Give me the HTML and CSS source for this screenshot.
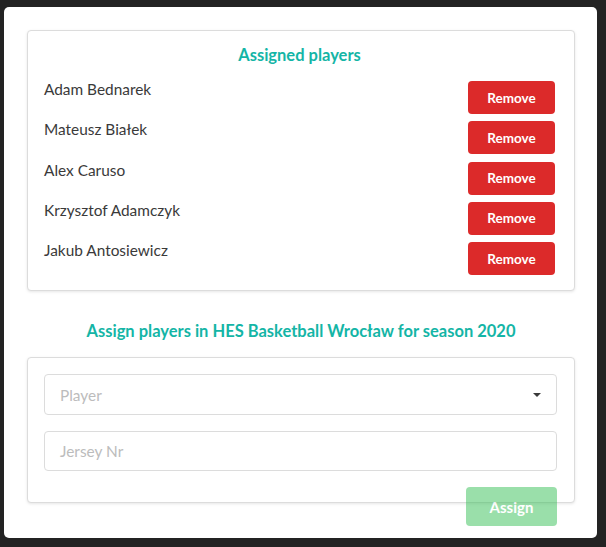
FILE: index.html
```html
<!DOCTYPE html>
<html>
<head>
<meta charset="utf-8">
<link rel="stylesheet" href="styles.css">
</head>
<body>
<div class="backdrop">
  <div class="modal">
    <section class="card assigned">
      <h2 class="title">Assigned players</h2>
      <ul class="players">
        <li class="player"><span class="name">Adam Bednarek</span><button class="btn-remove">Remove</button></li>
        <li class="player"><span class="name">Mateusz Białek</span><button class="btn-remove">Remove</button></li>
        <li class="player"><span class="name">Alex Caruso</span><button class="btn-remove">Remove</button></li>
        <li class="player"><span class="name">Krzysztof Adamczyk</span><button class="btn-remove">Remove</button></li>
        <li class="player"><span class="name">Jakub Antosiewicz</span><button class="btn-remove">Remove</button></li>
      </ul>
    </section>
    <h2 class="title assign-title">Assign players in HES Basketball Wrocław for season 2020</h2>
    <section class="card form">
      <div class="field select">
        <span class="placeholder">Player</span>
        <span class="caret"></span>
      </div>
      <div class="field">
        <span class="placeholder">Jersey Nr</span>
      </div>
    </section>
    <button class="btn-assign">Assign</button>
  </div>
</div>
</body>
</html>
```

FILE: styles.css
```css
* { box-sizing: border-box; }
html, body { margin: 0; padding: 0; }
body {
  background: #232323;
  font-family: Lato, "Open Sans", sans-serif;
  width: 606px;
  height: 547px;
  overflow: hidden;
}
.backdrop {
  padding: 7px 0 0 4px;
}
.modal {
  width: 593px;
  height: 531px;
  background: #fff;
  border-radius: 5px;
  padding: 23px 22px 12px 23px;
  display: flex;
  flex-direction: column;
}
.card {
  border: 1px solid #dcdcdc;
  border-radius: 4px;
  box-shadow: 0 1px 3px rgba(0,0,0,0.10);
  background: #fff;
  flex-shrink: 0;
}
.assigned {
  padding: 13px 19px 15px 16px;
  height: 261px;
}
.title {
  margin: 0;
  text-align: center;
  color: #14b5a6;
  font-size: 16.5px;
  font-weight: 700;
  line-height: 22px;
}
.players {
  list-style: none;
  margin: 15px 0 0;
  padding: 0;
  display: flex;
  flex-direction: column;
  gap: 7.25px;
}
.player {
  display: flex;
  justify-content: space-between;
  align-items: flex-start;
  height: 33px;
}
.name {
  font-size: 15.4px;
  color: #3a3a3a;
  line-height: 18px;
  margin-top: -1px;
}
.btn-remove {
  width: 87px;
  height: 33px;
  border: none;
  border-radius: 4px;
  background: #dc2a2a;
  color: #fff;
  font-family: Lato, sans-serif;
  font-weight: 700;
  font-size: 13.5px;
  padding: 0;
}
.assign-title {
  margin: 29px 0 15px;
  flex-shrink: 0;
}
.form {
  padding: 16px 17px 31px 16px;
  height: 146px;
  display: flex;
  flex-direction: column;
  gap: 16px;
}
.field {
  height: 40px;
  flex-shrink: 0;
  border: 1px solid #dcdcdc;
  border-radius: 4px;
  display: flex;
  align-items: center;
  justify-content: space-between;
  padding: 0 15px 0 15px;
}
.field.select { height: 41px; }
.placeholder {
  font-size: 15.4px;
  color: #bcbcbc;
}
.caret {
  width: 0;
  height: 0;
  border-left: 4px solid transparent;
  border-right: 4px solid transparent;
  border-top: 4px solid #3a3a3a;
  margin-top: 1px;
}
.btn-assign {
  align-self: flex-end;
  flex-shrink: 0;
  margin: -16px 18px 0 0;
  width: 91px;
  height: 39px;
  border: none;
  border-radius: 4px;
  background: #37c057;
  opacity: 0.5;
  color: #fff;
  font-family: Lato, sans-serif;
  font-weight: 700;
  font-size: 15px;
  padding: 0;
}
```
